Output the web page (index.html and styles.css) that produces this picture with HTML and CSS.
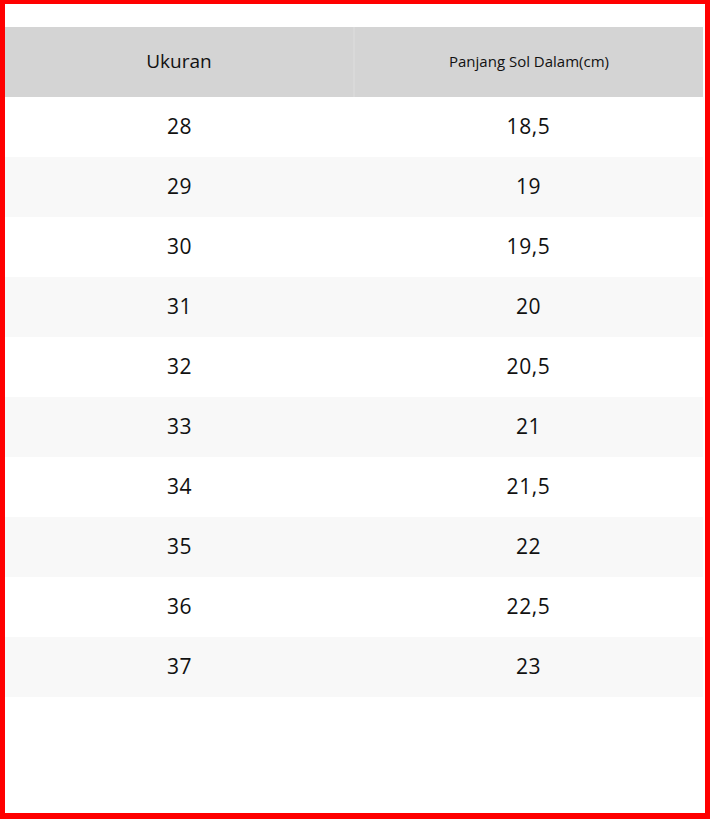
FILE: index.html
```html
<!DOCTYPE html>
<html lang="id">
<head>
<meta charset="utf-8">
<title>Ukuran</title>
<link rel="stylesheet" href="styles.css">
</head>
<body>
<div class="frame">
  <table class="size-table">
    <thead>
      <tr>
        <th class="h-size">Ukuran</th>
        <th class="h-len">Panjang Sol Dalam(cm)</th>
      </tr>
    </thead>
    <tbody>
      <tr><td>28</td><td>18,5</td></tr>
      <tr><td>29</td><td>19</td></tr>
      <tr><td>30</td><td>19,5</td></tr>
      <tr><td>31</td><td>20</td></tr>
      <tr><td>32</td><td>20,5</td></tr>
      <tr><td>33</td><td>21</td></tr>
      <tr><td>34</td><td>21,5</td></tr>
      <tr><td>35</td><td>22</td></tr>
      <tr><td>36</td><td>22,5</td></tr>
      <tr><td>37</td><td>23</td></tr>
    </tbody>
  </table>
</div>
</body>
</html>
```
FILE: styles.css
```css
html, body {
  margin: 0;
  padding: 0;
  background: #fff;
}
.frame {
  box-sizing: border-box;
  width: 710px;
  height: 819px;
  border: 5px solid #ff0000;
  border-top-width: 4px;
  border-bottom-width: 6px;
  padding: 23px 2px 0 0;
  font-family: "Open Sans", "Noto Sans", sans-serif;
  color: #111;
}
.size-table {
  width: 698px;
  border-collapse: collapse;
  table-layout: fixed;
}
.size-table th {
  background: #d4d4d4;
  height: 68px;
  padding: 0 0 2px;
  font-weight: 400;
  text-align: center;
  vertical-align: middle;
}
.size-table th.h-size {
  font-size: 19px;
  border-right: 2px solid #d9d9d9;
}
.size-table th.h-len {
  font-size: 15px;
}
.size-table td {
  height: 58px;
  padding: 0 0 2px;
  text-align: center;
  vertical-align: middle;
  font-size: 21px;
  letter-spacing: 0.6px;
  line-height: 1;
}
.size-table tbody tr:nth-child(even) td {
  background: #f8f8f8;
}
```
